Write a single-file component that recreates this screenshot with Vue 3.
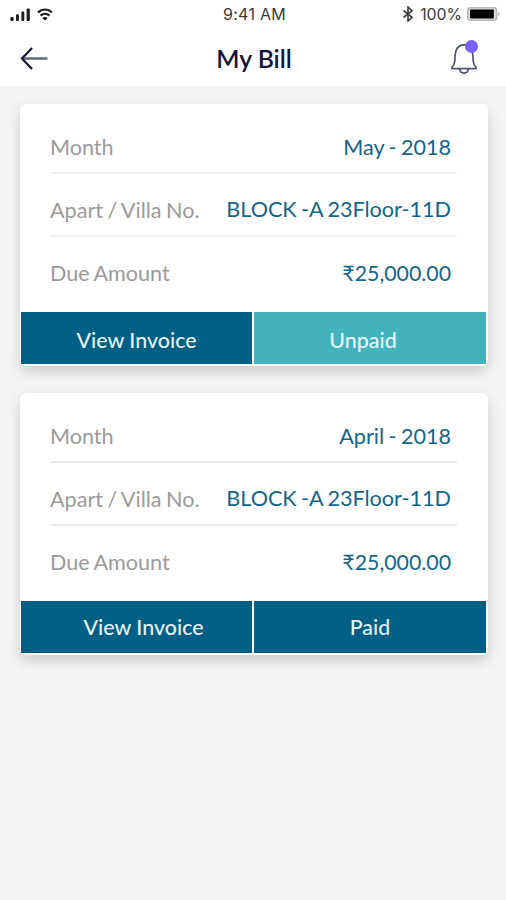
<script setup>
const bills = [
  { key: 'may', month: 'May - 2018', unit: 'BLOCK -A 23Floor-11D', amount: '25,000.00', status: 'Unpaid' },
  { key: 'april', month: 'April - 2018', unit: 'BLOCK -A 23Floor-11D', amount: '25,000.00', status: 'Paid' },
]
</script>

<template>
  <div class="screen">
    <header class="top">
      <div class="status">
        <div class="status-left">
          <svg class="signal" width="21" height="13" viewBox="0 0 21 13">
            <rect x="0.4" y="9" width="3.2" height="4" rx="1" />
            <rect x="6" y="6.2" width="2.9" height="6.8" rx="1" />
            <rect x="11.4" y="3.4" width="2.9" height="9.6" rx="1" />
            <rect x="16.6" y="0.4" width="3.2" height="12.6" rx="1" />
          </svg>
          <svg class="wifi" width="16" height="13" viewBox="0 0 16 13" fill="none" stroke="#222" stroke-width="2.2">
            <path d="M1 4.500C5 .5 11 .5 15 4.500" />
            <path d="M3.500 7.600c2.600-2.400 6.400-2.400 9 0" />
            <path d="M8 12.500 5.300 10c1.500-1.300 3.900-1.300 5.400 0z" fill="#111" stroke="none" />
          </svg>
        </div>
        <span class="clock">9:41 AM</span>
        <div class="status-right">
          <svg width="12" height="16" viewBox="0 0 12 16" fill="none" stroke="#444" stroke-width="1.700">
            <path d="M1.500 4.500 10 11.300 6 15V1l4 3.700L1.500 11.500" />
          </svg>
          <span class="percent">100%</span>
          <svg width="34" height="14" viewBox="0 0 34 14">
            <rect x="0.800" y="0.800" width="28.800" height="12.400" rx="2.500" fill="#ddd" stroke="#b9b9b9" stroke-width="1.600" />
            <rect x="3" y="2.500" width="23.800" height="9" rx="0.800" fill="#000" />
            <path d="M31.300 5c1.500.6 1.500 3.400 0 4z" fill="#999" />
          </svg>
        </div>
      </div>
      <div class="nav">
        <svg class="back" width="28" height="24" viewBox="0 0 28 24" fill="none">
          <path d="M2 12.500H27.500" stroke="#626a7c" stroke-width="2.600" />
          <path d="M12 2 2 12.500 12 23" stroke="#14143c" stroke-width="2.200" />
        </svg>
        <h1>My Bill</h1>
        <div class="bell">
          <svg width="26" height="32" viewBox="0 0 26 32" fill="none" stroke="#4a546a" stroke-width="1.700">
            <path d="M1 26.700v-1.500c2.300-1.800 2.800-4.500 2.900-8.700C4 9 6 2.900 13 2.900S22 9 22.100 16.500c.1 4.200.6 6.900 2.900 8.700v1.500z" />
            <path d="M8.800 27c.3 5.400 8.100 5.400 8.400 0" />
          </svg>
          <i class="dot"></i>
        </div>
      </div>
    </header>

    <main>
      <article v-for="bill in bills" :key="bill.key" class="card" :class="bill.key">
        <dl>
          <div class="row">
            <dt>Month</dt>
            <dd>{{ bill.month }}</dd>
          </div>
          <div class="row unit">
            <dt>Apart / Villa No.</dt>
            <dd>{{ bill.unit }}</dd>
          </div>
          <div class="row">
            <dt>Due Amount</dt>
            <dd class="amount"><span class="rupee">₹</span>{{ bill.amount }}</dd>
          </div>
        </dl>
        <div class="actions">
          <button class="invoice">View Invoice</button>
          <button class="state" :class="bill.status.toLowerCase()">{{ bill.status }}</button>
        </div>
      </article>
    </main>
  </div>
</template>

<style>
body {
  background: #f5f5f5;
}
</style>

<style scoped>
.screen {
  box-sizing: border-box;
  width: 506px;
  min-height: 900px;
  background: #f5f5f5;
  font-family: Lato, "Liberation Sans", sans-serif;
}
.top {
  height: 86px;
  background: #fff;
}
.status {
  display: grid;
  grid-template-columns: 1fr auto 1fr;
  align-items: center;
  height: 28px;
  padding: 0 5px;
  font-family: Inter, Roboto, sans-serif;
  color: #3a3a3a;
}
.status-left,
.status-right {
  display: flex;
  align-items: center;
}
.status-left {
  gap: 6px;
  padding-left: 5px;
}
.signal {
  fill: #1c1c1c;
}
.status-right {
  justify-content: flex-end;
}
.clock {
  padding-left: 3px;
  font-size: 16px;
  line-height: 28px;
  letter-spacing: 0.3px;
}
.percent {
  margin: 0 5px 0 6px;
  font-size: 15.800px;
}
.nav {
  display: grid;
  grid-template-columns: 1fr auto 1fr;
  align-items: center;
  height: 60px;
  padding: 0 19px 0 20px;
}
h1 {
  margin: 0;
  padding: 1px 0 0 1px;
  font-size: 24.800px;
  line-height: 30px;
  font-weight: 600;
  color: #14143c;
}
.bell {
  position: relative;
  justify-self: end;
  width: 26px;
  height: 32px;
  margin-right: 10px;
}
.dot {
  position: absolute;
  top: -2.500px;
  right: -0.500px;
  width: 13px;
  height: 13px;
  border-radius: 50%;
  background: #7b61ff;
}
main {
  display: flex;
  flex-direction: column;
  gap: 27px;
  padding: 18px 18px 0 20px;
}
.card {
  box-sizing: border-box;
  height: 262px;
  padding: 12px 1px 0;
  border-radius: 6px;
  background: #fff;
  box-shadow: 0 6px 14px rgba(0, 0, 0, 0.17);
}
dl {
  height: 196px;
  margin: 0 30px 0 29px;
}
.row {
  box-sizing: border-box;
  display: flex;
  justify-content: space-between;
  height: 64px;
  padding: 16px 6px 0 0;
  border-bottom: 2px solid #f0f0f0;
  font-size: 21.600px;
  line-height: 30px;
  word-spacing: -1.100px;
  white-space: nowrap;
}
.row:first-child {
  height: 58px;
}
.row:last-child {
  border-bottom: 0;
  padding-top: 20px;
}
.row.unit {
  height: 63px;
  padding-top: 20px;
}
.may .row:last-child {
  padding-top: 21px;
}
.april .row {
  border-color: #e9e9e9;
}
.april .row:first-child {
  height: 58px;
}
.april .row:last-child {
  padding-top: 21px;
}
dt {
  color: #9b9b9b;
}
.unit dt {
  padding-top: 1px;
}
dd {
  margin: 0;
  color: #14658a;
}
.amount {
  font-size: 21.300px;
}
.actions {
  display: grid;
  grid-template-columns: 231px 232px;
  gap: 2px;
  height: 52px;
}
button {
  border: 0;
  padding: 0;
  font: 500 21.400px/30px Lato, sans-serif;
  color: #e6f2f8;
  background: #005f84;
}
.may button {
  padding-top: 3px;
}
.unpaid {
  padding-right: 14px;
  background: #42b3bb;
}
.april .invoice {
  padding-left: 14px;
}
</style>
